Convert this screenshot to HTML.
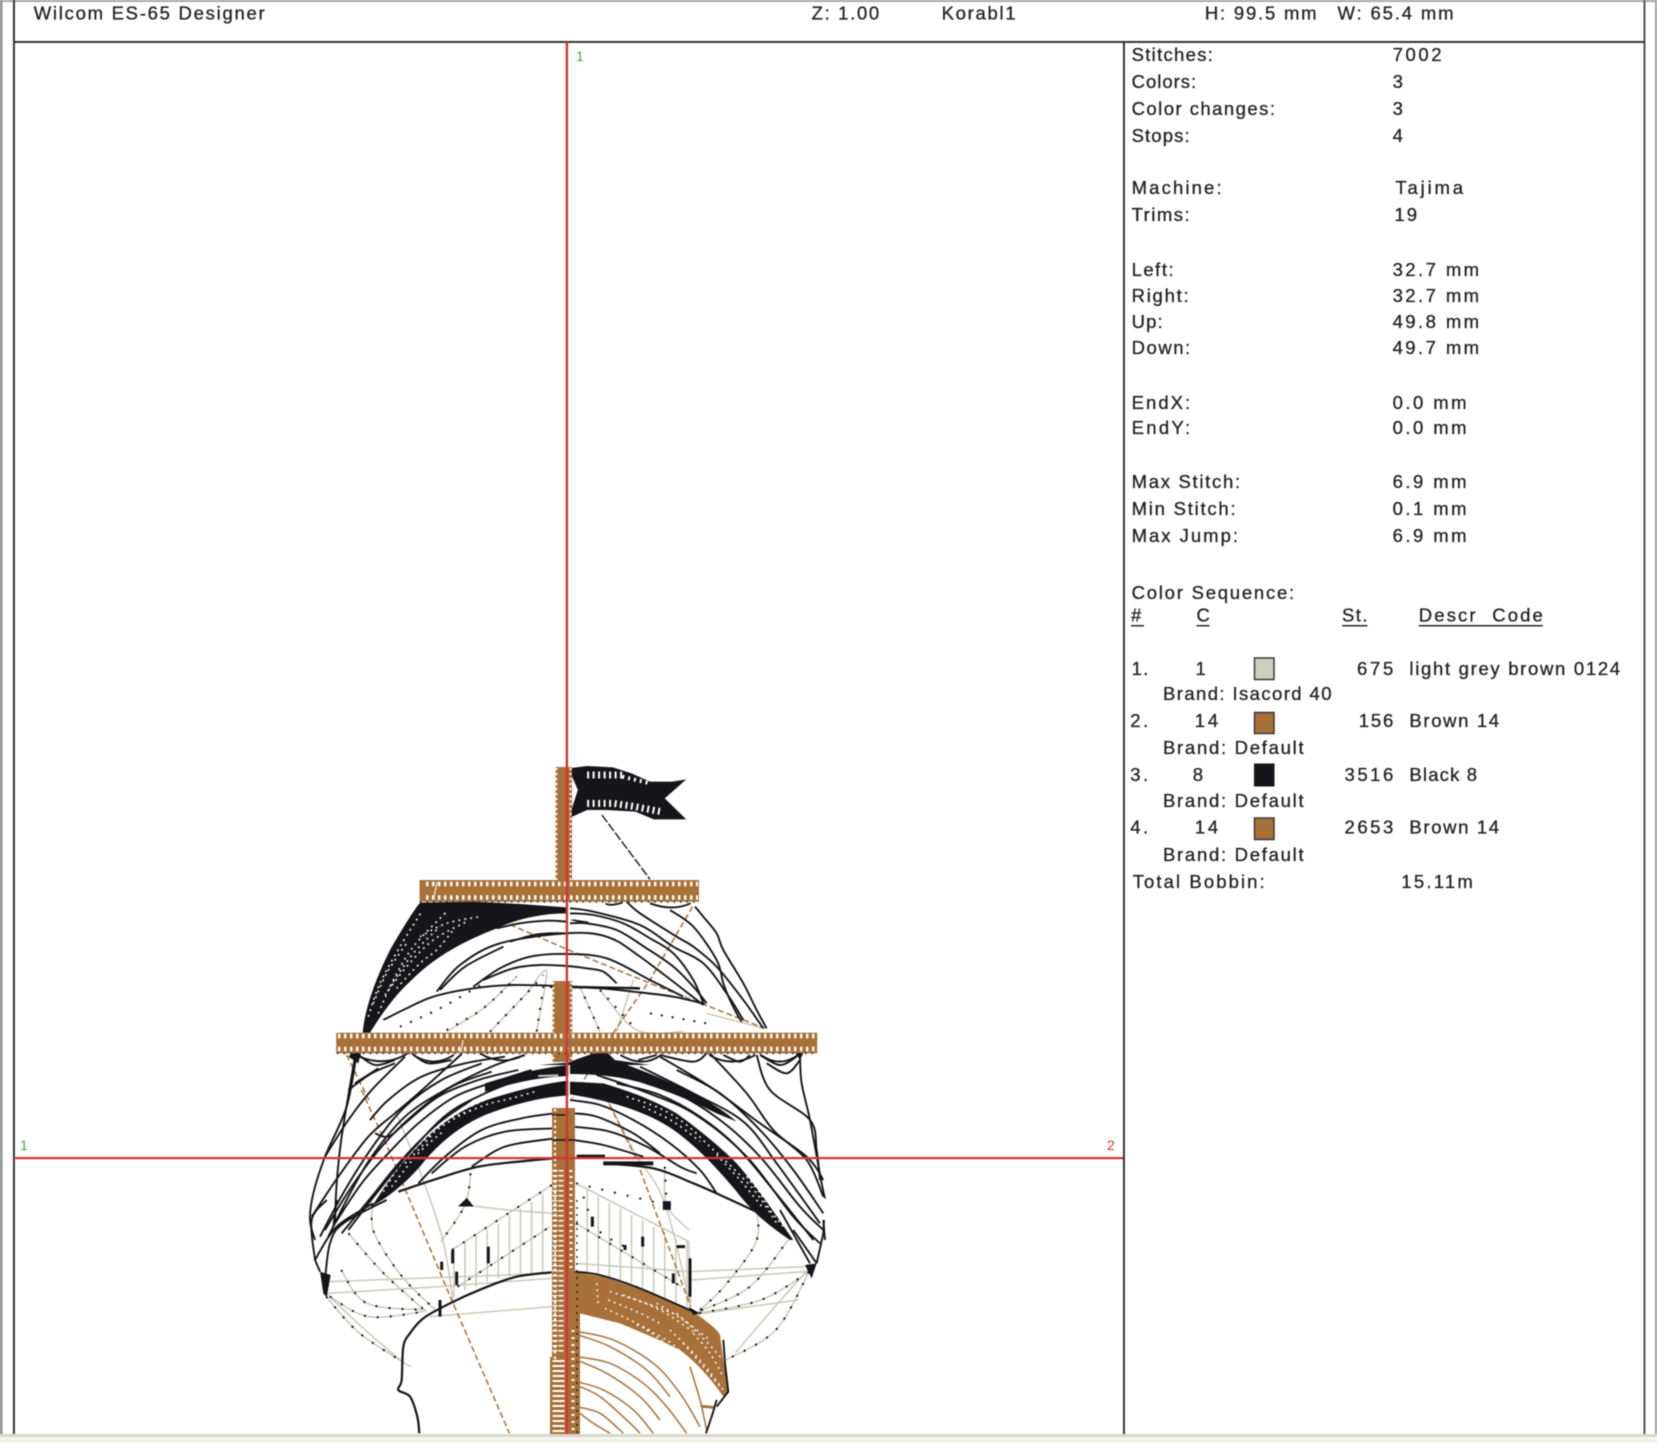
<!DOCTYPE html>
<html><head><meta charset="utf-8"><title>Wilcom ES-65 Designer</title>
<style>
html,body{margin:0;padding:0;background:#fff;width:1657px;height:1443px;overflow:hidden}
svg{display:block;position:absolute;left:0;top:0;filter:blur(.4px)}
text{font-family:"Liberation Sans",sans-serif;font-size:18.5px;fill:#222;stroke:#222;stroke-width:.3}
.k path,.k polyline{vector-effect:non-scaling-stroke}
.bl{fill:none;stroke:#16161a;stroke-width:1.9;stroke-linejoin:round}
.gr{fill:none;stroke:#c8c8b8;stroke-width:1.5;stroke-linejoin:round}
.br{fill:none;stroke:#a8713a;stroke-width:1.5;stroke-linejoin:round}
.wd{fill:none;stroke:#fff;stroke-width:1.6;stroke-dasharray:1.8 4.2}
</style></head><body>
<svg width="1657" height="1443" viewBox="0 0 1657 1443" xmlns="http://www.w3.org/2000/svg">
<rect width="1657" height="1443" fill="#fff"/>
<!-- frame -->
<rect x="0" y="0" width="1657" height="2" fill="#a8a8a8"/>
<rect x="0" y="0" width="2.5" height="1435" fill="#8a8f90"/>
<rect x="13" y="0" width="1.9" height="1435" fill="#2a2d30"/>
<rect x="1643.5" y="0" width="1.9" height="1435" fill="#4a4d50"/>
<rect x="1655" y="0" width="2" height="1435" fill="#a0a0a0"/>
<rect x="13" y="41" width="1632" height="1.9" fill="#2a2d30"/>
<rect x="1123" y="42" width="1.9" height="1393" fill="#2a2d30"/>
<rect x="0" y="1434" width="1657" height="3" fill="#d8d8cc"/>
<rect x="0" y="1437" width="1657" height="6" fill="#f6f6f0"/>
<rect x="0" y="1440" width="1657" height="1" fill="#e6e6dc"/>

<!-- light grey structure, zoom-2 coordinates -->
<g class="k" transform="translate(280,1090) scale(.37,.3333)">
<g class="gr">
<path d="M465 480L735 285M480 590L730 410M800 280L1105 455L1110 640M800 400L1085 590"/>
<path d="M470 480V620M500 460V600M530 440V590M560 420V575M590 400V565M620 375V560M650 355V555M680 335V550M710 310V545M830 300V545M860 320V550M890 340V560M920 355V570M950 375V580M980 390V595M1010 410V610M1040 425V625M1070 445V640M1100 455V650"/>
<path d="M135 575L730 550M130 610L435 590L735 565M405 680L735 650M800 520L1110 545M1110 570L1420 545M1110 545L1420 530M1130 672L1400 630"/>
</g>
<g class="gr s">
<path d="M310 60L380 250L440 450L470 650M880 20L960 190L1040 340L1110 650M1040 230L1045 345L1105 420M515 250L500 345L435 455"/>
<path d="M500 345L620 360L740 370"/>
<path d="M250 345L255 430L330 560L420 660M125 620L210 725L330 815L355 830M135 620L240 680L390 665M165 540L235 640L395 660M185 430L280 550L395 665M125 610L230 720L330 815M1290 365L1285 460L1200 590L1130 665M1430 545L1340 720L1205 810M1430 545L1300 630L1130 670M1380 440L1270 590L1130 665M1430 535L1330 660L1230 790"/>
</g>
</g>
<!-- grey threads in upper sail -->
<g class="k gr s" transform="translate(340,880) scale(.3333)">
<path d="M320 455L430 385L530 290M450 455L560 340L600 285L620 285L590 455M720 320L780 455M780 330L890 450L1030 455M880 300L830 455M1100 400L1270 445"/>
</g>
<!-- black dotted overlay on grey -->
<g class="k s" transform="translate(280,1090) scale(.37,.3333)" fill="none" stroke="#16161a" stroke-width="2" stroke-dasharray="2 11">
<path d="M465 480L735 285M480 590L730 410M800 280L1045 345M800 400L1085 590"/>
<path d="M250 345L255 430L330 560L420 660M125 620L210 725L330 815M135 620L240 680L390 665M165 540L235 640L395 660M185 430L280 550L395 665"/>
<path d="M1290 365L1285 460L1200 590L1130 665M1430 545L1340 720L1205 810M1430 545L1300 630L1130 670M1380 440L1270 590L1130 665"/>
<path d="M515 250L500 345L435 455M1040 230L1045 345M820 320L860 420L950 480"/>
</g>
<g class="k s" transform="translate(340,880) scale(.3333)" fill="none" stroke="#16161a" stroke-width="2" stroke-dasharray="2 9">
<path d="M180 440L300 385L430 310M320 450L430 385L530 290M450 455L560 340L610 285M590 455L610 320M720 320L780 455M780 330L890 450M930 400L1100 430"/>
</g>
<!-- short black verticals -->
<g class="k" transform="translate(310,1200) scale(.3333)" fill="none" stroke="#16161a" stroke-width="3">
<path d="M428 150V190M440 215V255M535 140V190M395 185V210M390 300V350"/>
<path d="M455 15H482L470 0Z" fill="#16161a"/>
</g>
<g class="k" transform="translate(560,1200) scale(.3333)" fill="none" stroke="#16161a" stroke-width="3">
<path d="M97 50V80M390 175V290M340 220V250M248 110V140M195 135V150M350 140H375"/>
<path d="M313 8H328V25H313Z" fill="#16161a"/>
</g>

<!-- brown hull -->
<g class="k" transform="translate(560,1200) scale(.3333)">
<path d="M45 215L130 230L250 270L400 335C440 365 470 385 480 405L490 480L505 575L490 590C450 530 400 480 360 450C300 420 240 395 180 370L60 340Z" fill="#a8713a"/>
<g class="wd s">
<path d="M110 250L115 320M150 275L260 310L350 345M145 300L230 335L300 370M135 325L210 360L280 395M290 310L370 360L450 420M350 340L420 405L490 480M330 390L420 480L490 570M260 390L330 440L400 500M400 400L450 460L490 530M370 430L430 500L480 560M190 285L300 330L400 395M230 375L320 420L390 480"/>
</g>
<g class="br s">
<path d="M55 395L160 420L280 490L360 580L420 680M55 405L150 440L260 510L330 590M50 470L150 490L250 550L320 620L380 700M50 480L140 520L240 590L300 660M50 545L130 570L220 630L280 700M60 560L120 590L200 660L240 700M50 620L120 640L190 700M60 640L100 670L150 700M390 500L420 600L440 690"/>
<path d="M425 619L460 622" stroke-width="3"/>
</g>
<path class="bl s" d="M45 215L120 225L240 265L400 335M470 600L455 650L438 700" stroke-width="2"/>
</g>

<!-- long brown threads -->
<g class="k" transform="translate(280,1090) scale(.37,.3333)">
<path class="br" d="M220 0L290 170L460 620L620 1030M880 20L960 200L1110 650" stroke-dasharray="6 3"/>
</g>
<g class="k" transform="translate(280,740) scale(.37,.3333)">
<path class="br" d="M510 500L780 630L1000 730L1310 865M1115 500L1000 720L900 880L790 1075M180 945L240 1080" stroke-dasharray="6 3"/>
</g>

<!-- upper sail black -->
<g class="k" transform="translate(340,880) scale(.3333)">
<path d="M68 458C75 380 110 290 150 210C185 150 215 100 240 68L400 65L540 72L680 82L680 100C600 100 530 118 470 145C380 180 290 225 215 300C160 350 120 410 90 458Z" fill="#16161a"/>
<g class="wd s">
<path d="M85 410L120 310L180 200L245 95M115 400L160 300L220 200L320 95M135 345L200 260L280 180L380 125M170 325L240 250L290 210L340 150M100 370L140 280L200 190M150 320L220 220L300 140M240 170L320 130L420 110"/>
</g>
<g class="bl s">
<path d="M130 420L200 385L280 350L400 325L520 315L650 318L780 325L880 335L1000 350L1095 372"/>
<path d="M290 335L360 255L480 190L680 160L800 170L900 230L1090 375"/>
<path d="M300 330L375 260L490 200"/>
<path d="M400 320L480 265L570 230L680 222L800 235L930 300L1030 350"/>
<path d="M430 300L520 265L600 255L680 258L740 265L790 275L830 310"/>
<path d="M470 145L540 130L620 122L680 125M510 185L580 165L630 160L680 160"/>
<path d="M690 100L760 105L850 130L930 175L1000 220L1060 300L1090 370"/>
<path d="M690 130L740 130L830 150L920 205L1000 260L1060 320L1100 370"/>
<path d="M690 85L760 95L900 135L1000 200L1090 250L1160 340L1210 420"/>
<path d="M860 65L900 100L1010 170L1060 200L1130 260L1210 360L1270 445"/>
<path d="M1065 80L1090 110L1130 160L1150 210L1210 310L1250 390L1280 445"/>
<path d="M990 90L1060 140L1130 240L1150 310L1170 360L1190 400L1205 425"/>
<path d="M630 320L900 325" stroke-width="2.5"/>
</g>
<path d="M700 118L745 125L750 135L690 120Z" fill="#16161a"/>
</g>

<!-- scallops -->
<g class="k" transform="translate(280,740) scale(.37,.3333)">
<g class="bl" stroke-width="1.4">
<path d="M205 945Q280 985 345 940M360 945Q415 985 470 945M540 940Q600 980 660 945M920 945Q980 985 1030 945M1160 945Q1220 985 1285 945M1300 945Q1350 985 1400 945"/>
<path d="M925 488Q890 500 880 490M1000 490Q1060 515 1110 490"/>
</g>
<path d="M810 965L880 932L905 960L1000 975L700 975Z" fill="#16161a"/>
</g>

<!-- middle sail, left -->
<g class="k" transform="translate(305,1050) scale(.3333)">
<path d="M200 470C240 410 270 360 310 320C370 250 450 180 560 145C640 120 720 100 790 92L790 136C700 142 620 165 540 195C460 230 395 285 345 350C305 395 260 435 200 470Z" fill="#16161a"/>
<path d="M540 100C620 75 700 55 790 45L790 78C700 82 640 95 540 125Z" fill="#16161a"/>
<path d="M700 78L760 76" stroke="#c8c8c8" stroke-width="2" fill="none"/>
<g class="wd s"><path d="M235 425L290 340L370 260L450 205L540 165L620 145L700 122M300 340L350 290L420 215L500 180M260 410L340 310L420 240M450 190L540 150"/></g>
<g class="bl s">
<path d="M155 10L125 170L60 320L25 430L15 510L30 570"/>
<path d="M150 20L110 260L95 400L90 520"/>
<path d="M20 500L100 380L190 260L270 190L340 130L470 12"/>
<path d="M70 560L130 440L200 320L300 200L420 120L560 50L660 15"/>
<path d="M90 520L170 400L250 310L340 220L450 140L570 95L680 60"/>
<path d="M110 550L200 440L290 330L400 220L500 150"/>
<path d="M130 540L230 410L330 290L430 190L540 130L640 90"/>
<path d="M60 540L140 410L230 290L330 190L440 110L560 65"/>
<path d="M45 560L120 420L210 280L300 170L410 90L530 40"/>
<path d="M60 320L130 210L200 120L300 20"/>
<path d="M130 120L200 70L270 40M150 100L220 55"/>
<path d="M195 210L250 150L350 80L480 40L600 20"/>
<path d="M210 250L250 260L300 220L400 140L520 90L640 60"/>
<path d="M340 400L420 320L530 240L650 205L750 190"/>
<path d="M380 370L480 290L600 245L750 235"/>
<path d="M500 350L600 290L750 265"/>
<path d="M280 425L400 385L520 350L660 333L750 325" stroke-width="2.2"/>
<path d="M155 10L210 45L270 30M320 10L370 40L440 30"/>
</g>
<path d="M150 0L130 20L160 40L170 0Z" fill="#16161a"/>
</g>

<!-- middle sail, right -->
<g class="k" transform="translate(560,1050) scale(.3333)">
<path d="M30 95L130 100C200 120 280 150 350 190C420 240 480 290 530 340C600 420 650 500 700 570L690 570C630 530 580 490 530 425C480 365 430 310 370 262C300 205 200 160 30 133Z" fill="#16161a"/>
<path d="M30 35L100 10L140 10L170 35C250 60 340 100 420 140C460 165 490 180 530 215L470 190C400 155 330 125 250 100C180 78 100 72 30 72Z" fill="#16161a"/>
<g class="wd s"><path d="M200 140L300 175L380 225L450 290L520 355L590 430L650 520M560 380L600 430L630 480L670 530M250 170L340 215L420 275M470 315L540 390L610 475"/></g>
<g class="bl s">
<path d="M30 150L120 165L220 210L330 280L420 360L470 430"/>
<path d="M40 190L110 200L220 250L300 310"/>
<path d="M40 230L150 245L260 290L360 350L410 370"/>
<path d="M40 270L130 285L250 320"/>
<path d="M130 340L280 355L400 400L480 435L600 490" stroke-width="2.2"/>
<path d="M110 75L240 120L400 190L560 320L700 500L780 580"/>
<path d="M170 100L300 135L420 200L530 290L640 420L760 570"/>
<path d="M200 80L340 125L480 210L600 320L720 470L790 540"/>
<path d="M240 50L400 130L550 215L650 340L780 520"/>
<path d="M350 60L480 130L600 240L700 360L790 490"/>
<path d="M300 20L450 110L600 220L740 320L790 390"/>
<path d="M450 10L560 130L640 240L740 330L790 440"/>
<path d="M590 15L630 120L750 210L770 300L780 390"/>
<path d="M720 20L725 100L750 210L785 400L795 445"/>
<path d="M235 30L290 15M300 15L400 35L440 10M490 15L540 35L570 15M600 15L660 45L710 20M620 40L680 70L720 30"/>
<path d="M790 510L795 570"/>
</g>
<path d="M50 320H135M130 340H280" stroke="#16161a" stroke-width="4" fill="none"/>
<path d="M700 0L735 0L720 30Z" fill="#16161a"/>
</g>

<!-- bottom left wing + hull lines -->
<g class="k" transform="translate(310,1200) scale(.3333)">
<g class="bl s">
<path d="M15 180L5 60L50 0M70 80L80 0M15 180L80 80L190 10M45 240L60 130L100 70L230 0M15 180L30 215"/>
<path d="M328 700L322 650L300 590L265 570L275 540L280 440L300 400L340 355L420 310L520 265L620 230L725 217" stroke-width="2.2"/>
</g>
<path d="M30 215L62 225L50 292L40 280Z" fill="#16161a"/>
</g>
<g class="k" transform="translate(560,1200) scale(.3333)">
<path d="M735 195L770 190L755 235Z" fill="#16161a"/>
<path d="M385 320L420 340L400 345Z" fill="#16161a"/>
<g class="bl">
<path d="M770 190L790 100L792 60M700 90L770 190M660 30L750 190M490 420L495 490L505 575L470 620" stroke-width="1.9"/>
</g>
</g>

<!-- flag -->
<g class="k" transform="translate(280,740) scale(.37,.3333)">
<path d="M780 85L830 78L900 82L950 100L1000 125L1060 125L1098 118L1040 175L1098 238L1010 238L960 215L880 210L830 210L780 235L805 150Z" fill="#16161a"/>
<path d="M830 105H925" stroke="#fff" stroke-width="7" stroke-dasharray="2 3.5" fill="none"/>
<path d="M830 190H900L960 200L1030 215" stroke="#fff" stroke-width="7" stroke-dasharray="2 3.5" fill="none"/>
<path d="M925 110L1000 130" stroke="#fff" stroke-width="4" stroke-dasharray="2 4" fill="none"/>
<path d="M870 225L1000 418" stroke="#16161a" stroke-width="1.4" stroke-dasharray="9 2" fill="none"/>
</g>

<!-- masts -->
<rect x="555.6" y="767" width="16.4" height="113" fill="#a8713a"/>
<rect x="552.7" y="981" width="19.5" height="81" fill="#a8713a"/>
<rect x="552" y="1108" width="23" height="250" fill="#a8713a"/>
<rect x="550" y="1357" width="30" height="77" fill="#a8713a"/>
<rect x="575" y="1273" width="5" height="161" fill="#a8713a"/>
<g fill="none">
<path d="M556.5 768V880M570.5 768V880M553.5 982V1060M571 982V1060" stroke="#fff" stroke-width="1.8" stroke-dasharray="2 3"/>
<path d="M555 1109V1360" stroke="#fff" stroke-width="2" stroke-dasharray="2.5 3"/>
<path d="M555 1170V1355M561 1170V1355" stroke="#fff" stroke-width="5" stroke-dasharray="1.5 3.5"/>
<path d="M571 1170V1270" stroke="#fff" stroke-width="3" stroke-dasharray="2 4"/>
<path d="M555.5 1360V1433M561.5 1360V1433" stroke="#fff" stroke-width="6" stroke-dasharray="2 3"/>
<path d="M573 1330V1433" stroke="#fff" stroke-width="3" stroke-dasharray="2 5"/>
<path d="M577 1200V1433" stroke="#16161a" stroke-width="1.3" stroke-dasharray="2 5"/>
</g>
<g fill="none" stroke="#16161a">
<path d="M552 1115H565M552 1140H575" stroke-width="1.4"/>
</g>

<!-- yards -->
<rect x="419.5" y="880" width="279.5" height="21.7" fill="#a8713a"/>
<rect x="336.2" y="1032.7" width="481" height="20.6" fill="#a8713a"/>
<g fill="none" stroke="#fff">
<path d="M426 884H698M426 897.5H698" stroke-width="4.5" stroke-dasharray="2.4 3.6"/>
<path d="M338 1036H816M338 1049H816" stroke-width="4.5" stroke-dasharray="2.4 3.6"/>
<path d="M437 882L434 897M463 1040L461 1052" stroke-width="1"/>
</g>
<g fill="none" stroke="#16161a" stroke-dasharray="1.5 5" stroke-width="1.2">
<path d="M420 902H699M337 1053.5H816"/>
</g>

<!-- guide lines -->
<rect x="565.7" y="42" width="2.4" height="1392" fill="#d33434"/>
<rect x="14" y="1157" width="1109" height="2.2" fill="#d33434"/>
<text x="576" y="61" style="font-size:14px;fill:#3fa83f;stroke:none">1</text>
<text x="20" y="1150" style="font-size:14px;fill:#3fa83f;stroke:none">1</text>
<text x="1107" y="1150" style="font-size:14px;fill:#d33434;stroke:none">2</text>

<g transform="translate(0,.2)">
<!-- header -->
<text x="33.7" y="19.5" textLength="231">Wilcom ES-65 Designer</text>
<text x="811.6" y="19.5" textLength="67.6">Z: 1.00</text>
<text x="941.6" y="19.5" textLength="74">Korabl1</text>
<text x="1204.9" y="19.5" textLength="111.7">H: 99.5 mm</text>
<text x="1337.5" y="19.5" textLength="116">W: 65.4 mm</text>

<!-- stats -->
<text x="1131.6" y="61" textLength="81.3">Stitches:</text><text x="1392.6" y="61" textLength="49">7002</text>
<text x="1131.6" y="88" textLength="64.5">Colors:</text><text x="1392.6" y="88" textLength="11.5">3</text>
<text x="1131.6" y="115" textLength="143.4">Color changes:</text><text x="1392.6" y="115" textLength="11.5">3</text>
<text x="1131.6" y="142" textLength="58">Stops:</text><text x="1392.6" y="142" textLength="13">4</text>
<text x="1131.6" y="194" textLength="90">Machine:</text><text x="1395.4" y="194" textLength="67.7">Tajima</text>
<text x="1131.6" y="221" textLength="58">Trims:</text><text x="1394.4" y="221" textLength="22.7">19</text>
<text x="1131.6" y="276" textLength="42">Left:</text><text x="1392.6" y="276" textLength="86.5">32.7 mm</text>
<text x="1131.6" y="302" textLength="57">Right:</text><text x="1392.6" y="302" textLength="86.5">32.7 mm</text>
<text x="1131.6" y="328" textLength="31">Up:</text><text x="1392.6" y="328" textLength="86.5">49.8 mm</text>
<text x="1131.6" y="354" textLength="58.6">Down:</text><text x="1392.6" y="354" textLength="86.5">49.7 mm</text>
<text x="1131.6" y="409" textLength="58.6">EndX:</text><text x="1392.6" y="409" textLength="74">0.0 mm</text>
<text x="1131.6" y="434" textLength="58.6">EndY:</text><text x="1392.6" y="434" textLength="74">0.0 mm</text>
<text x="1131.6" y="488" textLength="108.5">Max Stitch:</text><text x="1392.6" y="488" textLength="74">6.9 mm</text>
<text x="1131.6" y="515" textLength="104">Min Stitch:</text><text x="1392.6" y="515" textLength="74">0.1 mm</text>
<text x="1131.6" y="542" textLength="106.4">Max Jump:</text><text x="1392.6" y="542" textLength="74">6.9 mm</text>

<text x="1131.6" y="599" textLength="162.6">Color Sequence:</text>
<text x="1131" y="621.5" textLength="13">#</text>
<text x="1196.5" y="621.5" textLength="13">C</text>
<text x="1342" y="621.5" textLength="25.5">St.</text>
<text x="1418.8" y="621.5" textLength="124" xml:space="preserve">Descr  Code</text>

<text x="1131.6" y="675" textLength="16.7">1.</text><text x="1195.5" y="675" textLength="8">1</text>
<text x="1357" y="675" textLength="36.3">675</text><text x="1409.4" y="675" textLength="210.7">light grey brown 0124</text>
<text x="1163" y="700" textLength="168.5">Brand: Isacord 40</text>

<text x="1130.2" y="727" textLength="18">2.</text><text x="1194.8" y="727" textLength="23.4">14</text>
<text x="1358.8" y="727" textLength="34.5">156</text><text x="1409.4" y="727" textLength="89.7">Brown 14</text>
<text x="1163" y="754" textLength="140.6">Brand: Default</text>

<text x="1130.2" y="781" textLength="18">3.</text><text x="1192.7" y="781" textLength="11.5">8</text>
<text x="1344.5" y="781" textLength="48.8">3516</text><text x="1409.4" y="781" textLength="67.7">Black 8</text>
<text x="1163" y="807" textLength="140.6">Brand: Default</text>

<text x="1130.2" y="833.5" textLength="18">4.</text><text x="1194.8" y="833.5" textLength="23.4">14</text>
<text x="1344.5" y="833.5" textLength="48.8">2653</text><text x="1409.4" y="833.5" textLength="89.7">Brown 14</text>
<text x="1163" y="861" textLength="140.6">Brand: Default</text>

<text x="1132.7" y="888" textLength="132">Total Bobbin:</text>
<text x="1401.3" y="888" textLength="71.5">15.11m</text>
</g>
<g fill="#2a2a2a">
<rect x="1131" y="625" width="13" height="1.5"/>
<rect x="1196.5" y="625" width="13" height="1.5"/>
<rect x="1342" y="625" width="25.5" height="1.5"/>
<rect x="1418.8" y="625" width="124" height="1.5"/>
</g>
<rect x="1254.5" y="658" width="19.5" height="21.5" fill="#cfcfbd" stroke="#3a3a3a" stroke-width="1.5"/>
<rect x="1254.5" y="712.5" width="19.5" height="21" fill="#a8713a" stroke="#3a3a3a" stroke-width="1.5"/>
<rect x="1254" y="763.5" width="20.5" height="23" fill="#16161a"/>
<rect x="1254.5" y="818" width="19.5" height="21.5" fill="#a8713a" stroke="#3a3a3a" stroke-width="1.5"/>
</svg>
<script>
document.querySelectorAll('.s path,path.s').forEach(function(p){
  var d=p.getAttribute('d');
  if(/[CQHVZ]/.test(d))return;
  var out=d.match(/M[^M]*/g).map(function(sub){
    var n=sub.match(/-?[\d.]+/g).map(Number),a=[];
    for(var i=0;i<n.length;i+=2)a.push([n[i],n[i+1]]);
    if(a.length<3)return sub;
    var r='M'+a[0][0]+' '+a[0][1];
    for(var j=0;j<a.length-1;j++){
      var p0=a[j-1]||a[j],p1=a[j],p2=a[j+1],p3=a[j+2]||a[j+1];
      r+='C'+(p1[0]+(p2[0]-p0[0])/6)+' '+(p1[1]+(p2[1]-p0[1])/6)+' '+(p2[0]-(p3[0]-p1[0])/6)+' '+(p2[1]-(p3[1]-p1[1])/6)+' '+p2[0]+' '+p2[1];
    }
    return r;
  }).join('');
  p.setAttribute('d',out);
});
</script>
</body></html>
